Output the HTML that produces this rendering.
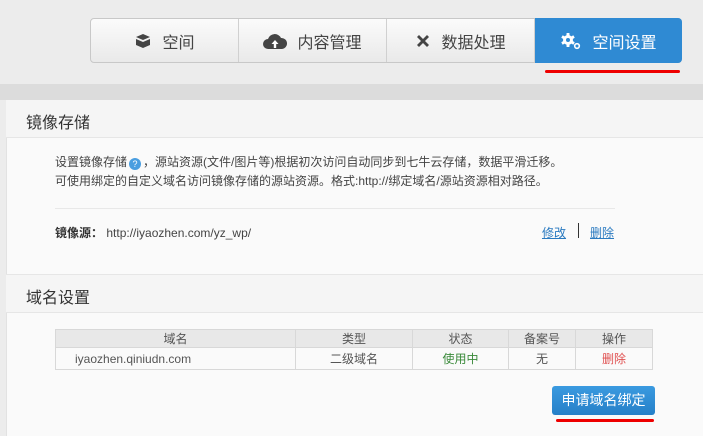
<!DOCTYPE html>
<html><head><meta charset="utf-8"><style>
*{margin:0;padding:0;box-sizing:border-box}
body{width:703px;height:436px;overflow:hidden;background:#ececec;font-family:"Liberation Sans","Noto Sans CJK SC",sans-serif;color:#333;position:relative}
.abs{position:absolute}
.tabs{left:90px;top:18px;width:592px;height:45px;display:flex;border:1px solid #c8c8c8;border-radius:4px;background:linear-gradient(#fbfbfb,#e9e9e9)}
.tab{flex:1;display:flex;align-items:center;justify-content:center;font-size:16px;color:#444;border-right:1px solid #d0d0d0}
.tab svg{margin-right:10px}
.tab.on{background:#2f8ad3;color:#fff;border:none;border-radius:0 4px 4px 0;margin:-1px -1px -1px 0}
.band{left:0;top:84px;width:703px;height:16px;background:#dcdcdc}
.panel{left:6px;top:100px;width:697px;height:336px;background:#fafafa;border-left:1px solid #e2e2e2}
.hd{left:6px;width:697px;height:38px;background:#f5f5f5;border-bottom:1px solid #e6e6e6;font-size:16px;padding:9px 0 0 20px;color:#333}
.t{font-size:12px;color:#444}
a{color:#2a7ac0;text-decoration:underline}
table{border-collapse:collapse;font-size:12px;color:#555;table-layout:fixed}
td,th{border:1px solid #d8d8d8;text-align:center;height:22px;font-weight:normal}
th{background:#e8e8e8;height:18px}
</style></head><body>
<div class="abs tabs">
 <div class="tab"><svg width="18" height="18" viewBox="0 0 18 18"><path d="M2 5l7-3 7 3-7 3z M2 7l7 3v6l-7-3z M16 7l-7 3v6l7-3z" fill="#444"/></svg>空间</div>
 <div class="tab"><svg width="24" height="16" viewBox="0 0 24 16"><path d="M5 16a5 5 0 0 1 0-10 7 7 0 0 1 13-1 5.5 5.5 0 0 1 1 11z" fill="#444"/><path d="M12 7l-3.5 4h2.3v4h2.4v-4h2.3z" fill="#fff"/></svg>内容管理</div>
 <div class="tab"><svg width="16" height="16" viewBox="0 0 16 16"><path d="M2 4l2-2 10 10-2 2z M12 2l2 2-10 10-2-2z" fill="#444"/></svg>数据处理</div>
 <div class="tab on"><svg width="22" height="18" viewBox="0 0 22 18"><g fill="#fff"><rect x="6.5" y="1" width="3" height="14" rx="0.5"/><rect x="6.5" y="1" width="3" height="14" rx="0.5" transform="rotate(60 8 8)"/><rect x="6.5" y="1" width="3" height="14" rx="0.5" transform="rotate(120 8 8)"/><circle cx="8" cy="8" r="5"/></g><circle cx="8" cy="8" r="2" fill="#2f8ad3"/><circle cx="17" cy="14" r="2.3" fill="none" stroke="#fff" stroke-width="1.6"/></svg>空间设置</div>
</div>
<div class="abs" style="left:545px;top:70px;width:135px;height:3px;background:#e00;border-radius:2px"></div>
<div class="abs band"></div>
<div class="abs panel"></div>
<div class="abs hd" style="top:100px">镜像存储</div>
<div class="abs t" style="left:55px;top:153px;line-height:19px">设置镜像存储<span style="display:inline-block;width:12px;height:12px;border-radius:50%;background:#4a9ee0;color:#fff;font-size:9px;text-align:center;line-height:12px;margin:0 2px;vertical-align:-1px">?</span>，源站资源(文件/图片等)根据初次访问自动同步到七牛云存储，数据平滑迁移。<br>可使用绑定的自定义域名访问镜像存储的源站资源。格式:http://绑定域名/源站资源相对路径。</div>
<div class="abs" style="left:55px;top:208px;width:560px;height:1px;background:#e8e8e8"></div>
<div class="abs t" style="left:55px;top:224px"><b style="font-weight:bold;color:#333">镜像源：</b> http://iyaozhen.com/yz_wp/</div>
<div class="abs t" style="left:542px;top:224px"><a>修改</a></div>
<div class="abs" style="left:578px;top:223px;width:1px;height:15px;background:#333"></div>
<div class="abs t" style="left:590px;top:224px"><a>删除</a></div>
<div class="abs" style="left:6px;top:274px;width:697px;height:1px;background:#e6e6e6"></div>
<div class="abs hd" style="top:275px">域名设置</div>
<table class="abs" style="left:55px;top:329px;width:598px">
<colgroup><col style="width:240px"><col style="width:117px"><col style="width:96px"><col style="width:67px"><col></colgroup>
<tr><th>域名</th><th>类型</th><th>状态</th><th>备案号</th><th>操作</th></tr>
<tr><td style="text-align:left;padding-left:19px">iyaozhen.qiniudn.com</td><td>二级域名</td><td style="color:#3a8a3a">使用中</td><td>无</td><td style="color:#e05050">删除</td></tr>
</table>
<div class="abs" style="left:552px;top:386px;width:103px;height:29px;background:linear-gradient(#3a9ae0,#2680c8);border-radius:3px;color:#fff;font-size:14px;text-align:center;line-height:29px">申请域名绑定</div>
<div class="abs" style="left:556px;top:419px;width:98px;height:3px;background:#e00;border-radius:2px"></div>
</body></html>
